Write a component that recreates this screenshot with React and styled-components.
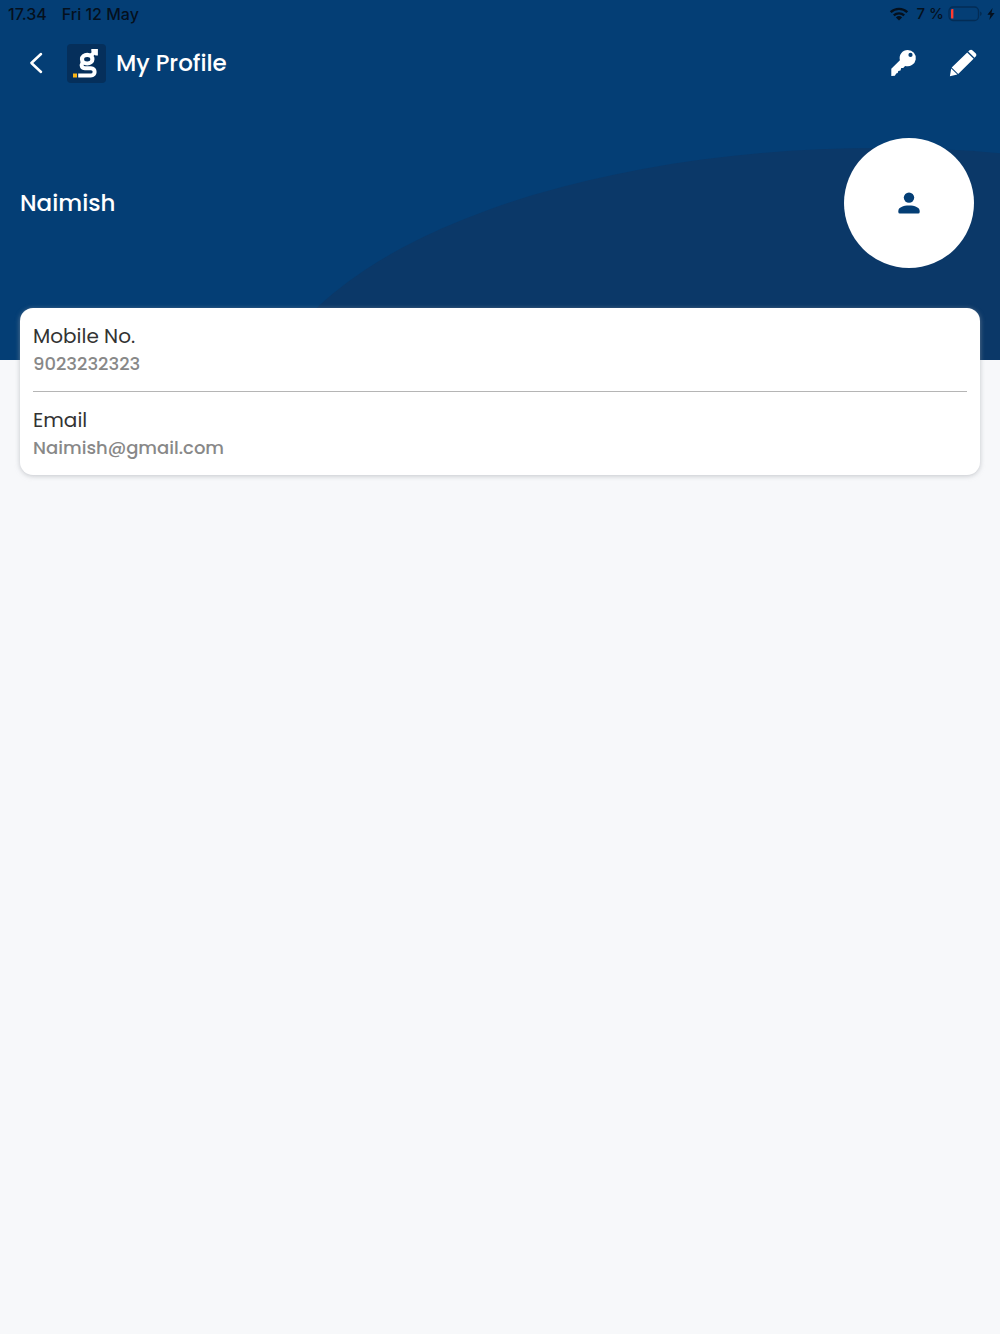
import React from "react";
import styled, { createGlobalStyle } from "styled-components";

const GlobalStyle = createGlobalStyle`
  *, *::before, *::after { box-sizing: border-box; }
  body {
    margin: 0;
    background: #f7f8fa;
    font-family: Poppins, Inter, "Open Sans", sans-serif;
  }
`;

const Page = styled.div`
  min-height: 100vh;
  background: #f7f8fa;
`;

const Header = styled.header`
  position: relative;
  overflow: hidden;
  padding-bottom: 92px;
  background: #043e75;
  color: #fff;

  &::before {
    content: "";
    position: absolute;
    top: 148px;
    left: 26%;
    width: 124%;
    height: 550px;
    border-radius: 50%;
    background: #0b3868;
  }
`;

const StatusBar = styled.div`
  display: flex;
  align-items: center;
  justify-content: space-between;
  height: 28px;
  padding: 0 5px 0 8px;
  color: #05101d;
  font-family: Inter, sans-serif;
  font-weight: 500;
  line-height: 20px;
`;

const StatusGroup = styled.div`
  display: flex;
  align-items: center;
  gap: ${({ $gap }) => $gap}px;
`;

const StatusText = styled.span`
  font-size: ${({ $small }) => ($small ? 15 : 16)}px;
`;

const AppBar = styled.nav`
  display: flex;
  align-items: center;
  height: 70px;
  padding: 0 21px 0 20px;
`;

const IconButton = styled.button`
  display: flex;
  align-items: center;
  justify-content: center;
  width: 32px;
  height: 40px;
  padding: 0;
  border: 0;
  background: none;
  color: inherit;
  cursor: pointer;
`;

const Logo = styled.svg`
  margin: 0 10px 0 15px;
`;

const Title = styled.h1`
  flex: 1;
  margin: 0;
  font-size: 23px;
  font-weight: 500;
  line-height: 32px;
`;

const Actions = styled.div`
  display: flex;
  gap: 27px;
`;

const Hero = styled.section`
  position: relative;
  display: flex;
  align-items: center;
  justify-content: space-between;
  padding: 40px 26px 0 20px;
`;

const Name = styled.h2`
  margin: 0;
  font-size: 23px;
  font-weight: 500;
  line-height: 32px;
`;

const Avatar = styled.div`
  display: flex;
  align-items: center;
  justify-content: center;
  width: 130px;
  height: 130px;
  border-radius: 50%;
  background: #fff;
  color: #043e75;
`;

const Card = styled.dl`
  position: relative;
  margin: -52px 20px 0;
  padding: 0 13px;
  border-radius: 13px;
  background: #fff;
  box-shadow: 0 1px 5px rgba(160, 165, 172, 0.6);
`;

const Row = styled.div`
  padding: 14px 0 13px;

  & + & {
    border-top: 1px solid #b5b5b5;
  }
`;

const Label = styled.dt`
  color: #333;
  font-size: 20px;
  font-weight: 400;
  line-height: 28px;
`;

const Value = styled.dd`
  margin: 0;
  color: #888;
  font-size: 18px;
  font-weight: 500;
  line-height: 28px;
`;

const WifiIcon = () => (
  <svg width="20" height="14" viewBox="0 0 20 14" fill="none" stroke="currentColor" aria-hidden="true">
    <path d="M1.7 5.2a12 12 0 0 1 16.6 0" strokeWidth="2.4" />
    <path d="M4.8 8.4a7.6 7.6 0 0 1 10.4 0" strokeWidth="2.3" />
    <path d="M10 13.6 6.9 10.5a4.5 4.5 0 0 1 6.2 0z" fill="currentColor" stroke="none" />
  </svg>
);

const BatteryIcon = () => (
  <svg width="35" height="16" viewBox="0 0 35 16" aria-hidden="true">
    <rect x="1" y="1" width="29.5" height="13.5" rx="4" fill="none" stroke="#032c55" strokeWidth="1.3" />
    <path d="M3 4.2Q3 3 4.2 3h1.200v9.6H4.2Q3 12.600 3 11.400z" fill="#ff3b30" />
    <path d="M32 5.5q1.8.8 1.8 2.3T32 10z" fill="#032c55" />
  </svg>
);

const BoltIcon = () => (
  <svg width="8" height="12" viewBox="0 0 8 12" fill="currentColor" aria-hidden="true">
    <path d="M5.6 0 .4 6.7h3L2.3 12l5.3-7H4.5z" />
  </svg>
);

const BackIcon = () => (
  <svg width="14" height="22" viewBox="0 0 14 22" fill="none" stroke="currentColor" strokeWidth="2.5" strokeLinecap="round" strokeLinejoin="round" aria-hidden="true">
    <path d="M12 2 2.4 11 12 20" />
  </svg>
);

const BrandLogo = () => (
  <Logo width="39" height="39" viewBox="0 0 39 39" role="img" aria-label="Company logo">
    <rect width="39" height="39" rx="4" fill="#052f5b" />
    <rect x="6" y="29.500" width="4" height="4" fill="#fdb515" />
    <g fill="none" stroke="#fff">
      <ellipse cx="20.2" cy="15.2" rx="5.2" ry="4.3" strokeWidth="4.2" />
      <path d="M15.600 18.5c-2 3.4-.6 5.700 2.400 5.700h6c4.800 0 4.900 7.4-.2 7.4H11.200" strokeWidth="4" />
      <path d="m23.5 12.2 4-4" strokeWidth="4" />
    </g>
    <path d="M24.3 5h6.600v6.400h-2.400l-4.200-4z" fill="#fff" />
  </Logo>
);

const KeyIcon = () => (
  <svg width="28" height="28" viewBox="0 0 28 28" fill="currentColor" aria-hidden="true">
    <path
      fillRule="evenodd"
      d="M17.7.9a8.2 8.2 0 1 1-2.6 16l-1.9 2.2h-2l-.7 2.3-2.2.5-.6 2.1-1.5.6-1.3 2.2-3.6.2V19.8l8.6-8.5A8.2 8.2 0 0 1 17.7.9zm2.8 2.9a2.1 2.1 0 1 0 0 4.2 2.1 2.1 0 0 0 0-4.2z"
    />
  </svg>
);

const PencilIcon = () => (
  <svg width="28" height="28" viewBox="0 0 28 28" fill="currentColor" aria-hidden="true">
    <path d="m18.2 3.5 6.4 6.300L9.2 25l-6.500-6.500zM2.2 19.600l6.200 6L.9 27.200zM19.2 2.500l1.300-1.200a2.3 2.3 0 0 1 3.1.1l3 2.900a2.3 2.3 0 0 1 .1 3.1l-1.200 1.300z" />
  </svg>
);

const PersonIcon = () => (
  <svg width="22" height="22" viewBox="0 0 22 22" fill="currentColor" aria-hidden="true">
    <circle cx="11" cy="5.6" r="5.2" />
    <path d="M.3 19c0-3.8 4.9-5.600 10.700-5.600s10.700 1.800 10.700 5.600v1q0 1.500-1.500 1.500H1.800Q.3 21.500.3 20z" />
  </svg>
);

const details = [
  { label: "Mobile No.", value: "9023232323" },
  { label: "Email", value: "Naimish@gmail.com" },
];

export default function App() {
  return (
    <Page>
      <GlobalStyle />
      <Header>
        <StatusBar>
          <StatusGroup $gap={15}>
            <StatusText>17.34</StatusText>
            <StatusText>Fri 12 May</StatusText>
          </StatusGroup>
          <StatusGroup $gap={4}>
            <StatusGroup $gap={8}>
              <WifiIcon />
              <StatusText $small>7 %</StatusText>
            </StatusGroup>
            <BatteryIcon />
            <BoltIcon />
          </StatusGroup>
        </StatusBar>
        <AppBar aria-label="Profile">
          <IconButton type="button" aria-label="Back">
            <BackIcon />
          </IconButton>
          <BrandLogo />
          <Title>My Profile</Title>
          <Actions>
            <IconButton type="button" aria-label="Change password">
              <KeyIcon />
            </IconButton>
            <IconButton type="button" aria-label="Edit profile">
              <PencilIcon />
            </IconButton>
          </Actions>
        </AppBar>
        <Hero>
          <Name>Naimish</Name>
          <Avatar>
            <PersonIcon />
          </Avatar>
        </Hero>
      </Header>
      <main>
        <Card>
          {details.map(({ label, value }) => (
            <Row key={label}>
              <Label>{label}</Label>
              <Value>{value}</Value>
            </Row>
          ))}
        </Card>
      </main>
    </Page>
  );
}
